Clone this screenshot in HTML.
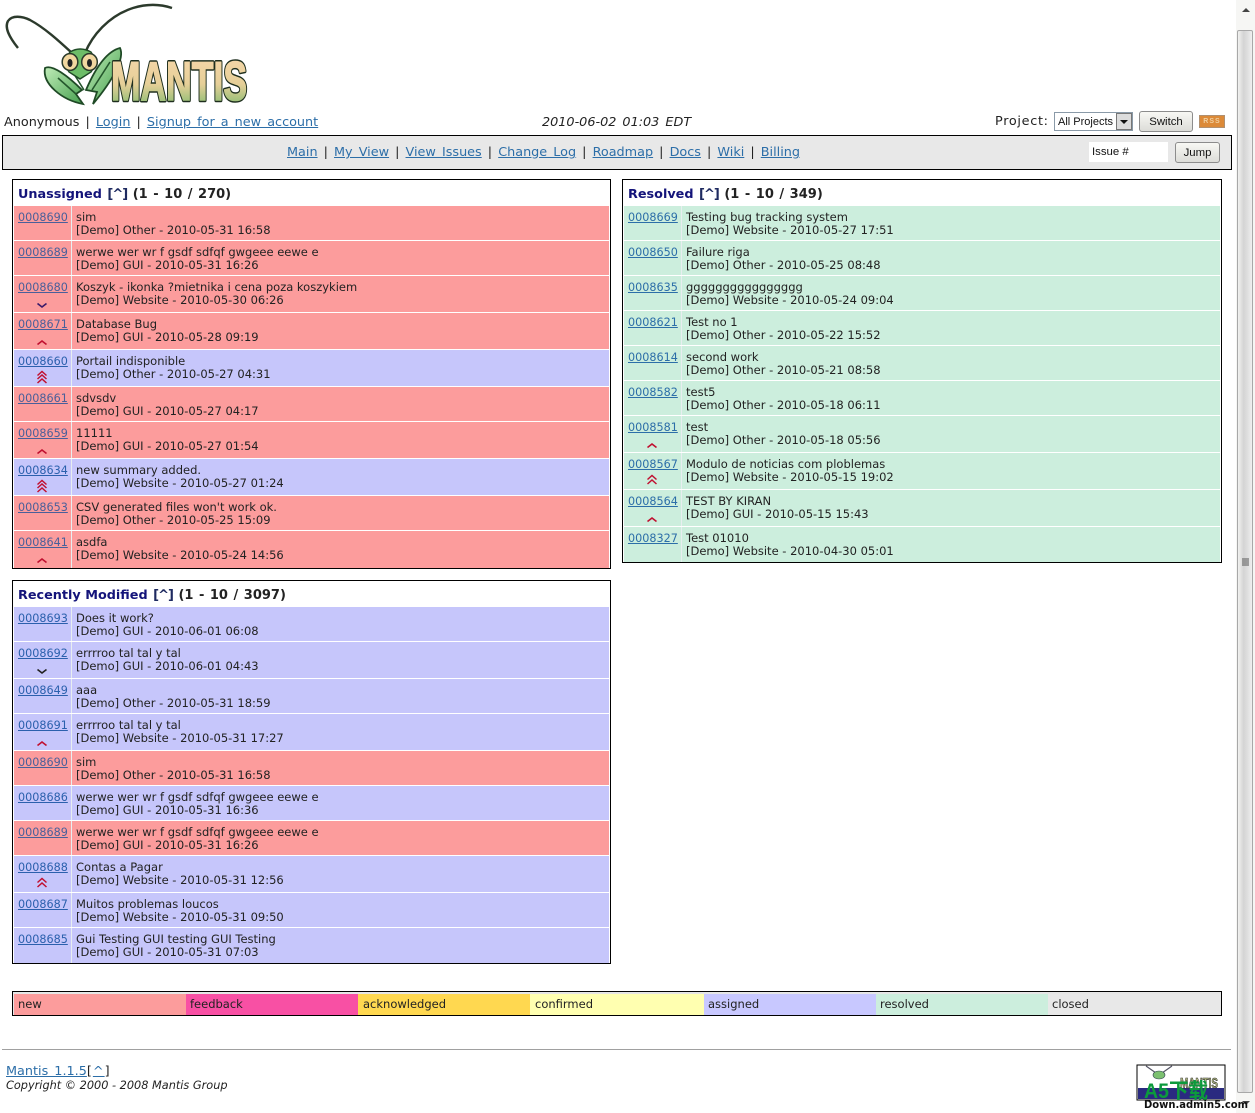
<!DOCTYPE html>
<html><head><meta charset="utf-8"><title>Mantis</title>
<style>
html,body{margin:0;padding:0;background:#fff;overflow:hidden}
body{width:1255px;height:1113px;position:relative;font:11.5px/13px "DejaVu Sans",sans-serif;color:#222}
a{color:#2c6ea8;text-decoration:underline}
.t{position:absolute;white-space:nowrap}
.big{font-size:12.8px;line-height:15px;word-spacing:2px}
.box{position:absolute;border:1px solid #000;background:#fff;box-sizing:border-box}
.h{position:absolute;left:5px;top:7px;font-size:13px;line-height:15px;font-weight:bold;white-space:nowrap;color:#222;word-spacing:1px}
.h b{color:#14147a;font-size:12.8px;word-spacing:0}
.h a{color:#1e2a60;text-decoration:none;letter-spacing:-1px}
.r{position:absolute;left:1px;right:1px}
.id{position:absolute;left:0;top:0;width:57px;bottom:0;border-right:1px solid #e8eef0;font-size:11.2px}
.id a{position:absolute;left:4px;top:5px}
.d{position:absolute;left:62px;top:5px;white-space:nowrap}
.id svg{position:absolute;left:22px}
.n{background:#fc9c9c}.a{background:#c6c6fb}.s{background:#cceedd}
.n a{color:#4a5f9a}.a a{color:#2b60ad}
.lg{position:absolute;top:2px;height:21px;line-height:21px;padding-left:4px;box-sizing:border-box}
.btn{position:absolute;box-sizing:border-box;border:1px solid #8c8c8c;border-radius:3px;background:linear-gradient(#f8f8f4,#dcdcd8);font:11.4px/20px "Liberation Sans",sans-serif;text-align:center;color:#111}
</style></head><body>

<svg style="position:absolute;left:0;top:0" width="260" height="110" viewBox="0 0 260 110">
<defs>
<linearGradient id="lg" x1="0" y1="0" x2="0" y2="1"><stop offset="0" stop-color="#f8d8ac"/><stop offset=".55" stop-color="#e6cf98"/><stop offset="1" stop-color="#72b868"/></linearGradient>
<linearGradient id="leaf" x1="0" y1="0" x2="1" y2="1"><stop offset="0" stop-color="#c0ecb8"/><stop offset="1" stop-color="#45a04e"/></linearGradient>
</defs>
<path d="M18 48C10 38 4 28 8 21C12 15 22 16 30 20C45 28 60 42 72 53" fill="none" stroke="#2c3a2c" stroke-width="2.4"/>
<path d="M85 53C92 36 108 16 133 8C146 4 160 4 172 8" fill="none" stroke="#2c3a2c" stroke-width="2.4"/>
<path d="M45 68C52 64 68 76 82 90L76 94L83 104C62 100 42 84 45 68Z" fill="url(#leaf)" stroke="#1f4a26" stroke-width="1.8"/>
<path d="M120 48C125 58 113 80 93 104L97 92L86 90C92 76 104 52 120 48Z" fill="url(#leaf)" stroke="#1f4a26" stroke-width="1.8"/>
<path d="M74 74L84 90M58 78L76 94M110 62L92 90" fill="none" stroke="#24562c" stroke-width="1.6"/>
<path d="M70 52Q80 46 91 52Q98 62 91 72L80 79L69 72Q62 62 70 52Z" fill="#6dbd68" stroke="#1f4a26" stroke-width="1.4"/>
<ellipse cx="70" cy="62" rx="7.8" ry="8.4" fill="#f1d7a0" stroke="#2a3a2a" stroke-width="1.5"/>
<ellipse cx="89.5" cy="62" rx="7.8" ry="8.4" fill="#f1d7a0" stroke="#2a3a2a" stroke-width="1.5"/>
<ellipse cx="70" cy="63" rx="2.5" ry="4" fill="#222"/><ellipse cx="89.5" cy="63" rx="2.5" ry="4" fill="#222"/>
<text x="111" y="100" font-family="Liberation Sans" font-weight="bold" font-size="55" textLength="136" lengthAdjust="spacingAndGlyphs" fill="#1e2e1e" stroke="#1e2e1e" stroke-width="4.6" stroke-linejoin="round">MANTIS</text>
<text x="111" y="100" font-family="Liberation Sans" font-weight="bold" font-size="55" textLength="136" lengthAdjust="spacingAndGlyphs" fill="url(#lg)" stroke="url(#lg)" stroke-width="1.6">MANTIS</text>
</svg>

<div class="t big" style="left:4px;top:115px">Anonymous | <a href="#">Login</a> | <a href="#">Signup for a new account</a></div>
<div class="t big" style="left:542px;top:115px;font-style:italic">2010-06-02 01:03 EDT</div>
<div class="t big" style="left:995px;top:114px;letter-spacing:.7px">Project:</div>
<div style="position:absolute;left:1054px;top:112px;width:79px;height:19px;box-sizing:border-box;border:1px solid #8a9aa8;background:#fff;font:11px/18px 'Liberation Sans',sans-serif;padding-left:3px;color:#111;white-space:nowrap">All Projects<span style="position:absolute;right:0;top:0;width:16px;height:17px;background:#dcdcdc;border:1px solid #777;box-sizing:border-box"></span><span style="position:absolute;right:4px;top:7px;border:4px solid transparent;border-top:4px solid #111"></span></div>
<div class="btn" style="left:1139px;top:111px;width:54px;height:21px">Switch</div>
<div style="position:absolute;left:1199px;top:115px;width:26px;height:13px;background:#dc8a38;border:1px solid #b09070;box-sizing:border-box;font:bold 7px/11px 'Liberation Sans',sans-serif;color:#f0d0a0;text-align:center;letter-spacing:1px">RSS</div>

<div style="position:absolute;left:2px;top:135px;width:1230px;height:35px;box-sizing:border-box;border:1px solid #000;background:#e8e8e8"></div>
<div class="t big" style="left:287px;top:145px"><a href="#">Main</a> | <a href="#">My View</a> | <a href="#">View Issues</a> | <a href="#">Change Log</a> | <a href="#">Roadmap</a> | <a href="#">Docs</a> | <a href="#">Wiki</a> | <a href="#">Billing</a></div>
<div style="position:absolute;left:1089px;top:142px;width:79px;height:20px;background:#fff;font:11.4px/21px 'Liberation Sans',sans-serif;padding-left:3px;box-sizing:border-box;color:#111">Issue #</div>
<div class="btn" style="left:1175px;top:142px;width:45px;height:21px">Jump</div>

<!-- Unassigned -->
<div class="box" style="left:12px;top:179px;width:599px;height:390px">
<div class="h"><b>Unassigned</b> <a href="#">[^]</a> (1 - 10 / 270)</div>
<div class="r n" style="top:26px;height:34px"><div class="id"><a href="#">0008690</a></div><div class="d">sim<br>[Demo] Other - 2010-05-31 16:58</div></div>
<div class="r n" style="top:61px;height:34px"><div class="id"><a href="#">0008689</a></div><div class="d">werwe wer wr f gsdf sdfqf gwgeee eewe e<br>[Demo] GUI - 2010-05-31 16:26</div></div>
<div class="r n" style="top:96px;height:36px"><div class="id"><a href="#">0008680</a><svg style="top:26px" width="12" height="8"><path d="M1.5 1.5L6 5L10.5 1.5" fill="none" stroke="#3a1a6a" stroke-width="1.6"/></svg></div><div class="d">Koszyk - ikonka ?mietnika i cena poza koszykiem<br>[Demo] Website - 2010-05-30 06:26</div></div>
<div class="r n" style="top:133px;height:36px"><div class="id"><a href="#">0008671</a><svg style="top:25px" width="12" height="8"><path d="M1.5 6.5L6 3L10.5 6.5" fill="none" stroke="#c01030" stroke-width="1.6"/></svg></div><div class="d">Database Bug<br>[Demo] GUI - 2010-05-28 09:19</div></div>
<div class="r a" style="top:170px;height:36px"><div class="id"><a href="#">0008660</a><svg style="top:20px" width="12" height="14"><path d="M1.5 5.5L6 1.5L10.5 5.5M1.5 9L6 5L10.5 9M1.5 13L6 9L10.5 13" fill="none" stroke="#c01030" stroke-width="1.5"/></svg></div><div class="d">Portail indisponible<br>[Demo] Other - 2010-05-27 04:31</div></div>
<div class="r n" style="top:207px;height:34px"><div class="id"><a href="#">0008661</a></div><div class="d">sdvsdv<br>[Demo] GUI - 2010-05-27 04:17</div></div>
<div class="r n" style="top:242px;height:36px"><div class="id"><a href="#">0008659</a><svg style="top:25px" width="12" height="8"><path d="M1.5 6.5L6 3L10.5 6.5" fill="none" stroke="#c01030" stroke-width="1.6"/></svg></div><div class="d">11111<br>[Demo] GUI - 2010-05-27 01:54</div></div>
<div class="r a" style="top:279px;height:36px"><div class="id"><a href="#">0008634</a><svg style="top:20px" width="12" height="14"><path d="M1.5 5.5L6 1.5L10.5 5.5M1.5 9L6 5L10.5 9M1.5 13L6 9L10.5 13" fill="none" stroke="#c01030" stroke-width="1.5"/></svg></div><div class="d">new summary added.<br>[Demo] Website - 2010-05-27 01:24</div></div>
<div class="r n" style="top:316px;height:34px"><div class="id"><a href="#">0008653</a></div><div class="d">CSV generated files won't work ok.<br>[Demo] Other - 2010-05-25 15:09</div></div>
<div class="r n" style="top:351px;height:37px"><div class="id"><a href="#">0008641</a><svg style="top:25px" width="12" height="8"><path d="M1.5 6.5L6 3L10.5 6.5" fill="none" stroke="#c01030" stroke-width="1.6"/></svg></div><div class="d">asdfa<br>[Demo] Website - 2010-05-24 14:56</div></div>
</div>

<!-- Resolved -->
<div class="box" style="left:622px;top:179px;width:600px;height:384px">
<div class="h"><b>Resolved</b> <a href="#">[^]</a> (1 - 10 / 349)</div>
<div class="r s" style="top:26px;height:34px"><div class="id"><a href="#">0008669</a></div><div class="d">Testing bug tracking system<br>[Demo] Website - 2010-05-27 17:51</div></div>
<div class="r s" style="top:61px;height:34px"><div class="id"><a href="#">0008650</a></div><div class="d">Failure riga<br>[Demo] Other - 2010-05-25 08:48</div></div>
<div class="r s" style="top:96px;height:34px"><div class="id"><a href="#">0008635</a></div><div class="d">gggggggggggggggg<br>[Demo] Website - 2010-05-24 09:04</div></div>
<div class="r s" style="top:131px;height:34px"><div class="id"><a href="#">0008621</a></div><div class="d">Test no 1<br>[Demo] Other - 2010-05-22 15:52</div></div>
<div class="r s" style="top:166px;height:34px"><div class="id"><a href="#">0008614</a></div><div class="d">second work<br>[Demo] Other - 2010-05-21 08:58</div></div>
<div class="r s" style="top:201px;height:34px"><div class="id"><a href="#">0008582</a></div><div class="d">test5<br>[Demo] Other - 2010-05-18 06:11</div></div>
<div class="r s" style="top:236px;height:36px"><div class="id"><a href="#">0008581</a><svg style="top:25px" width="12" height="8"><path d="M1.5 6.5L6 3L10.5 6.5" fill="none" stroke="#c01030" stroke-width="1.6"/></svg></div><div class="d">test<br>[Demo] Other - 2010-05-18 05:56</div></div>
<div class="r s" style="top:273px;height:36px"><div class="id"><a href="#">0008567</a><svg style="top:21px" width="12" height="12"><path d="M1.5 5.5L6 1.5L10.5 5.5M1.5 10L6 6L10.5 10" fill="none" stroke="#c01030" stroke-width="1.5"/></svg></div><div class="d">Modulo de noticias com ploblemas<br>[Demo] Website - 2010-05-15 19:02</div></div>
<div class="r s" style="top:310px;height:36px"><div class="id"><a href="#">0008564</a><svg style="top:25px" width="12" height="8"><path d="M1.5 6.5L6 3L10.5 6.5" fill="none" stroke="#c01030" stroke-width="1.6"/></svg></div><div class="d">TEST BY KIRAN<br>[Demo] GUI - 2010-05-15 15:43</div></div>
<div class="r s" style="top:347px;height:35px"><div class="id"><a href="#">0008327</a></div><div class="d">Test 01010<br>[Demo] Website - 2010-04-30 05:01</div></div>
</div>

<!-- Recently Modified -->
<div class="box" style="left:12px;top:580px;width:599px;height:384px">
<div class="h"><b>Recently Modified</b> <a href="#">[^]</a> (1 - 10 / 3097)</div>
<div class="r a" style="top:26px;height:34px"><div class="id"><a href="#">0008693</a></div><div class="d">Does it work?<br>[Demo] GUI - 2010-06-01 06:08</div></div>
<div class="r a" style="top:61px;height:36px"><div class="id"><a href="#">0008692</a><svg style="top:26px" width="12" height="8"><path d="M1.5 1.5L6 5L10.5 1.5" fill="none" stroke="#222" stroke-width="1.6"/></svg></div><div class="d">errrroo tal tal y tal<br>[Demo] GUI - 2010-06-01 04:43</div></div>
<div class="r a" style="top:98px;height:34px"><div class="id"><a href="#">0008649</a></div><div class="d">aaa<br>[Demo] Other - 2010-05-31 18:59</div></div>
<div class="r a" style="top:133px;height:36px"><div class="id"><a href="#">0008691</a><svg style="top:25px" width="12" height="8"><path d="M1.5 6.5L6 3L10.5 6.5" fill="none" stroke="#c01030" stroke-width="1.6"/></svg></div><div class="d">errrroo tal tal y tal<br>[Demo] Website - 2010-05-31 17:27</div></div>
<div class="r n" style="top:170px;height:34px"><div class="id"><a href="#">0008690</a></div><div class="d">sim<br>[Demo] Other - 2010-05-31 16:58</div></div>
<div class="r a" style="top:205px;height:34px"><div class="id"><a href="#">0008686</a></div><div class="d">werwe wer wr f gsdf sdfqf gwgeee eewe e<br>[Demo] GUI - 2010-05-31 16:36</div></div>
<div class="r n" style="top:240px;height:34px"><div class="id"><a href="#">0008689</a></div><div class="d">werwe wer wr f gsdf sdfqf gwgeee eewe e<br>[Demo] GUI - 2010-05-31 16:26</div></div>
<div class="r a" style="top:275px;height:36px"><div class="id"><a href="#">0008688</a><svg style="top:21px" width="12" height="12"><path d="M1.5 5.5L6 1.5L10.5 5.5M1.5 10L6 6L10.5 10" fill="none" stroke="#c01030" stroke-width="1.5"/></svg></div><div class="d">Contas a Pagar<br>[Demo] Website - 2010-05-31 12:56</div></div>
<div class="r a" style="top:312px;height:34px"><div class="id"><a href="#">0008687</a></div><div class="d">Muitos problemas loucos<br>[Demo] Website - 2010-05-31 09:50</div></div>
<div class="r a" style="top:347px;height:35px"><div class="id"><a href="#">0008685</a></div><div class="d">Gui Testing GUI testing GUI Testing<br>[Demo] GUI - 2010-05-31 07:03</div></div>
</div>

<!-- Legend -->
<div class="box" style="left:12px;top:991px;width:1210px;height:25px;background:#e6e6e6">
<div class="lg" style="left:1px;width:172px;background:#fc9c9c">new</div>
<div class="lg" style="left:173px;width:172px;background:#f850a4">feedback</div>
<div class="lg" style="left:345px;width:172px;background:#ffd850;padding-left:5px">acknowledged</div>
<div class="lg" style="left:517px;width:174px;background:#ffffb0;padding-left:5px">confirmed</div>
<div class="lg" style="left:691px;width:172px;background:#c8c8ff">assigned</div>
<div class="lg" style="left:863px;width:172px;background:#cceedd">resolved</div>
<div class="lg" style="left:1035px;width:172px;background:#e8e8e8">closed</div>
</div>

<!-- Footer -->
<div style="position:absolute;left:2px;top:1049px;width:1229px;height:1px;background:#a0a0a0"></div>
<div class="t big" style="left:6px;top:1064px"><a href="#">Mantis 1.1.5</a><span style="letter-spacing:1px">[<a href="#">^</a>]</span></div>
<div class="t" style="left:6px;top:1079px;font-style:italic;font-size:11.3px">Copyright © 2000 - 2008 Mantis Group</div>

<!-- Scrollbar -->
<div style="position:absolute;left:1236px;top:0;width:19px;height:1113px;background:#f6f6f4"></div>
<div style="position:absolute;left:1237px;top:30px;width:16px;height:1063px;box-sizing:border-box;border:1px solid #a8a8a8;border-radius:2px;background:linear-gradient(90deg,#f2f2f0,#d4d4d4 40%,#e0e0e0 70%,#f0f0f0)"></div>
<svg style="position:absolute;left:1237px;top:0" width="18" height="1113"><path d="M5 12L9 8L13 12Z M5 1101L13 1101L9 1105Z" fill="#444"/><path d="M5 559H12M5 561H12M5 563H12M5 565H12" stroke="#555" stroke-width="1"/></svg>

<svg style="position:absolute;left:1136px;top:1064px" width="119" height="49" viewBox="0 0 119 49">
<rect x="1" y="1" width="88" height="35" fill="#fff" stroke="#000"/>
<rect x="2" y="24" width="86" height="11" fill="#2a2a80"/>
<path d="M10 2L20 9M36 2L26 9" stroke="#556" stroke-width="1.2" fill="none"/>
<ellipse cx="23" cy="11" rx="6" ry="4" fill="#7cc070" stroke="#345" stroke-width=".6"/>
<text x="44" y="24" font-family="Liberation Sans" font-weight="bold" font-size="15" fill="#b8c088" stroke="#222" stroke-width=".6" textLength="38" lengthAdjust="spacingAndGlyphs">MANTIS</text>
<text x="8" y="34" font-family="Liberation Sans, Noto Sans CJK SC, sans-serif" font-weight="bold" font-size="21" fill="#0c9a3c" textLength="64" lengthAdjust="spacingAndGlyphs">A5下载</text>
<text x="8" y="44" font-family="DejaVu Sans" font-weight="bold" font-size="10.5" fill="#111" textLength="104" lengthAdjust="spacingAndGlyphs">Down.admin5.com</text>
</svg>

</body></html>
